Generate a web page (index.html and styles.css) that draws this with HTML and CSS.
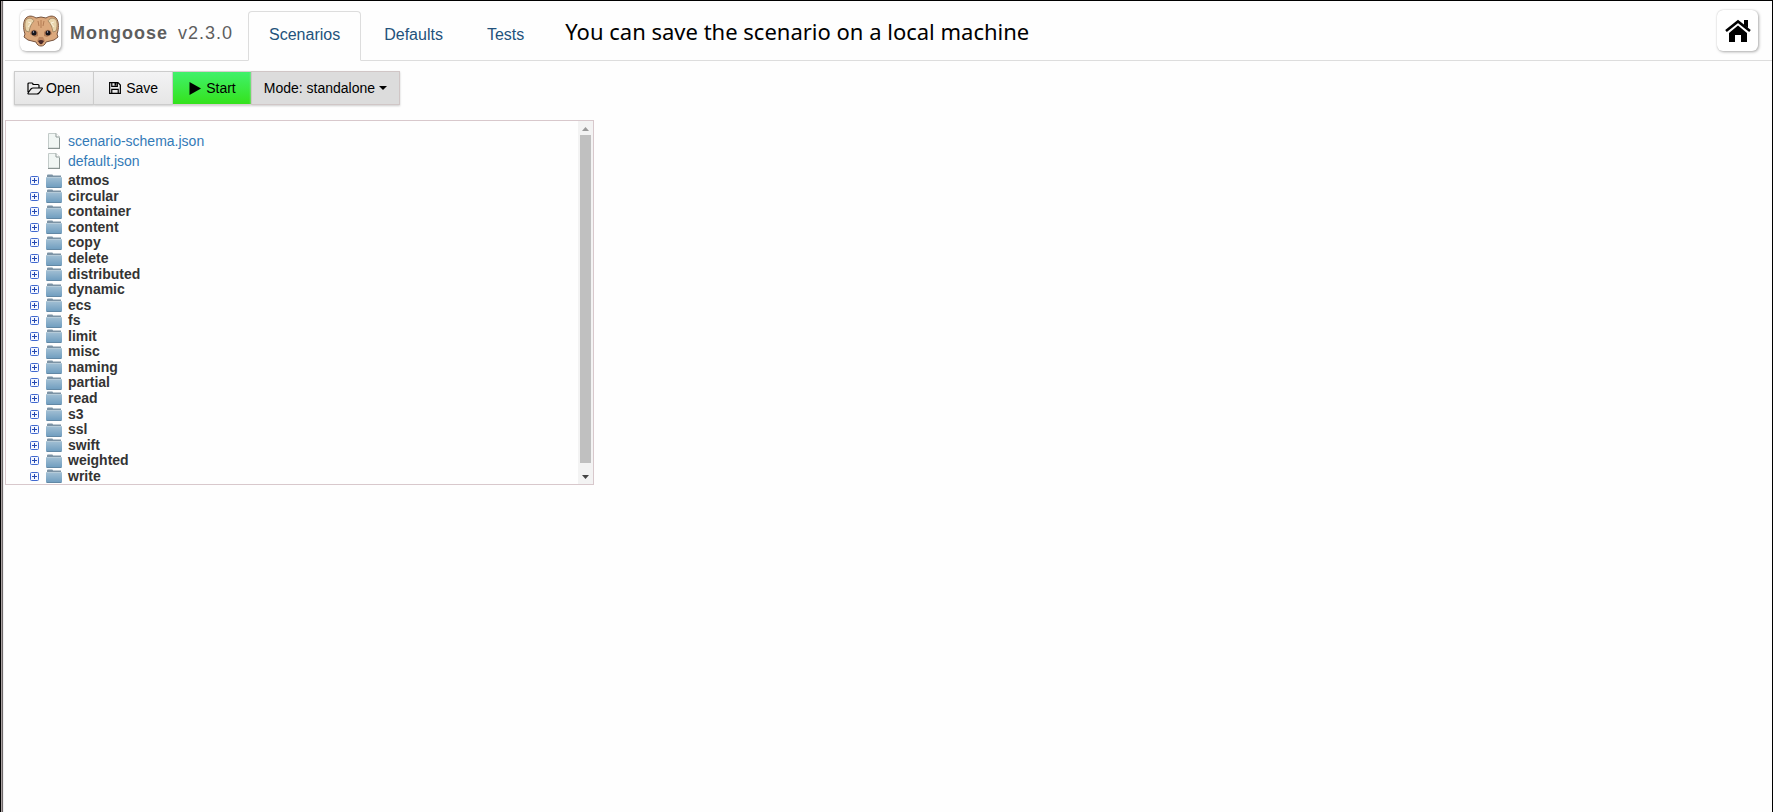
FILE: index.html
```html
<!DOCTYPE html>
<html lang="en">
<head>
<meta charset="utf-8">
<title>Mongoose</title>
<link rel="stylesheet" href="styles.css">
</head>
<body>
<svg class="defs" aria-hidden="true">
  <defs>
    <linearGradient id="folder-fill" x1="0" y1="0" x2="0" y2="1"><stop offset="0" stop-color="#a3c0d4"/><stop offset="1" stop-color="#6f9dbf"/></linearGradient>
    <symbol id="folder" viewBox="0 0 16 14">
      <path d="M1 1.500Q1 .5 2 .5h4q1 0 1 1H15v3H1z" fill="#7c93a5"/>
      <path d="M0 3h16v9.500q0 1-1 1H1q-1 0-1-1z" fill="url(#folder-fill)"/>
      <path d="M0 3.500h16" stroke="#b5cbd9"/><path d="M.5 13.500h15" stroke="#6288a5"/>
    </symbol>
    <symbol id="plus" viewBox="0 0 9 9">
      <rect x=".5" y=".5" width="8" height="8" rx="1" fill="#f4f7ff" stroke="#4169cf"/>
      <path d="M2 4.500h5M4.500 2v5" stroke="#2448b0"/>
    </symbol>
    <symbol id="file" viewBox="0 0 14 16">
      <path d="M1.500.5h7.500l3.500 3.500v11h-11z" fill="#f1f6f4" stroke="#c3cbc9"/>
      <path d="M9 .5v3.500h3.500" fill="#fff" stroke="#8d9896"/><path d="M1 15.500h12M12.500 5v10" stroke="#8b9593"/>
    </symbol>
  </defs>
</svg>
<header class="topbar">
  <a class="tile" href="#" aria-label="Mongoose">
    <svg width="36" height="32" viewBox="0 0 36 32">
      <path d="M2 19C0 14 0 6 3 3c3-3 7-2 10 0q5-2 10 0c3-2 7-3 10 0 3 3 3 11 1 16l1 3-4 3-8 2c-1 3-3 4-5 4s-4-1-5-4l-8-2-4-3z" fill="#dca97d" stroke="#77543f"/>
      <path d="M3 16C1 10 2 5 4 4c3-2 6 0 7 2-3 3-4 6-5 11zM33 16c2-6 1-11-1-12-3-2-6 0-7 2 3 3 4 6 5 11z" fill="#e9d5ad" stroke="#a98d68"/>
      <path d="M5 7l3 1-3 4M31 7l-3 1 3 4" fill="none" stroke="#faf2dc"/>
      <path d="M18 5v8M15 6l1 5M21 6l-1 5" stroke="#b47c54"/>
      <path d="M8 16q4-3 7 1v4l-3 1-5-3zM28 16q-4-3-7 1v4l3 1 5-3z" fill="#b67e58"/>
      <circle cx="11" cy="18" r="2.500" fill="#17151b"/><circle cx="25" cy="18" r="2.500" fill="#17151b"/>
      <circle cx="10.500" cy="17" r=".7" fill="#c9c4d8"/><circle cx="24.500" cy="17" r=".7" fill="#c9c4d8"/>
      <path d="M14 26l2-4h4l2 4-4 4z" fill="#bd855f"/>
      <path d="M15 26q3-2 6 0l-2 3h-2z" fill="#4c2b2b"/>
    </svg>
  </a>
  <div class="brand"><strong>Mongoose</strong><span>v2.3.0</span></div>
  <nav class="tabs">
    <a class="tab active" href="#">Scenarios</a>
    <a class="tab" href="#">Defaults</a>
    <a class="tab" href="#">Tests</a>
  </nav>
  <p class="message">You can save the scenario on a local machine</p>
  <a class="tile home" href="#" aria-label="Home">
    <svg width="28" height="24" viewBox="0 0 28 24">
      <path d="M2 12L14 2.500 26 12" fill="none" stroke="#000" stroke-width="2.600"/>
      <path d="M20 1h4v8l-4-3zM5 14l9-7.500 9 7.500v9h-6v-7h-6v7H5z"/>
    </svg>
  </a>
</header>
<main>
  <div class="toolbar">
    <button class="btn open" type="button"><svg width="16" height="13" viewBox="0 0 16 13"><path d="M1 10V2q0-1 1-1h3q1 0 1 1v.5h5q1 0 1 1V6M1 11l3-4q1-1 2-1h9q.6 0 .2.800L12 11q-1 1-2 1H2q-1.300 0-1-1z" fill="none" stroke="#000" stroke-width="1.200"/></svg>Open</button>
    <button class="btn save" type="button"><svg width="12" height="12" viewBox="0 0 13 13"><path d="M.7.700h9l2.600 2.600v9H.7zM3 .7v4h6v-4M3 12.300V8h7v4.300" fill="none" stroke="#000" stroke-width="1.300"/><path d="M6 1h2v3H6z"/></svg>Save</button>
    <button class="btn start" type="button"><svg width="12" height="13" viewBox="0 0 12 13"><path d="M.5 0l11.500 6.500L.5 13z"/></svg>Start</button>
    <button class="btn mode" type="button">Mode: standalone<span class="caret"></span></button>
  </div>
  <section class="panel">
    <div class="tree">
      <ul class="files">
        <li><svg width="14" height="16"><use href="#file"/></svg><a href="#">scenario-schema.json</a></li>
        <li><svg width="14" height="16"><use href="#file"/></svg><a href="#">default.json</a></li>
      </ul>
      <ul class="folders">
        <li><svg width="9" height="9"><use href="#plus"/></svg><svg width="16" height="14"><use href="#folder"/></svg>atmos</li>
        <li><svg width="9" height="9"><use href="#plus"/></svg><svg width="16" height="14"><use href="#folder"/></svg>circular</li>
        <li><svg width="9" height="9"><use href="#plus"/></svg><svg width="16" height="14"><use href="#folder"/></svg>container</li>
        <li><svg width="9" height="9"><use href="#plus"/></svg><svg width="16" height="14"><use href="#folder"/></svg>content</li>
        <li><svg width="9" height="9"><use href="#plus"/></svg><svg width="16" height="14"><use href="#folder"/></svg>copy</li>
        <li><svg width="9" height="9"><use href="#plus"/></svg><svg width="16" height="14"><use href="#folder"/></svg>delete</li>
        <li><svg width="9" height="9"><use href="#plus"/></svg><svg width="16" height="14"><use href="#folder"/></svg>distributed</li>
        <li><svg width="9" height="9"><use href="#plus"/></svg><svg width="16" height="14"><use href="#folder"/></svg>dynamic</li>
        <li><svg width="9" height="9"><use href="#plus"/></svg><svg width="16" height="14"><use href="#folder"/></svg>ecs</li>
        <li><svg width="9" height="9"><use href="#plus"/></svg><svg width="16" height="14"><use href="#folder"/></svg>fs</li>
        <li><svg width="9" height="9"><use href="#plus"/></svg><svg width="16" height="14"><use href="#folder"/></svg>limit</li>
        <li><svg width="9" height="9"><use href="#plus"/></svg><svg width="16" height="14"><use href="#folder"/></svg>misc</li>
        <li><svg width="9" height="9"><use href="#plus"/></svg><svg width="16" height="14"><use href="#folder"/></svg>naming</li>
        <li><svg width="9" height="9"><use href="#plus"/></svg><svg width="16" height="14"><use href="#folder"/></svg>partial</li>
        <li><svg width="9" height="9"><use href="#plus"/></svg><svg width="16" height="14"><use href="#folder"/></svg>read</li>
        <li><svg width="9" height="9"><use href="#plus"/></svg><svg width="16" height="14"><use href="#folder"/></svg>s3</li>
        <li><svg width="9" height="9"><use href="#plus"/></svg><svg width="16" height="14"><use href="#folder"/></svg>ssl</li>
        <li><svg width="9" height="9"><use href="#plus"/></svg><svg width="16" height="14"><use href="#folder"/></svg>swift</li>
        <li><svg width="9" height="9"><use href="#plus"/></svg><svg width="16" height="14"><use href="#folder"/></svg>weighted</li>
        <li><svg width="9" height="9"><use href="#plus"/></svg><svg width="16" height="14"><use href="#folder"/></svg>write</li>
      </ul>
    </div>
    <div class="scrollbar">
      <svg width="7" height="4" viewBox="0 0 7 4"><path d="M0 4l3.500-4L7 4z" fill="#999"/></svg>
      <div class="thumb"></div>
      <svg width="7" height="4" viewBox="0 0 7 4"><path d="M0 0l3.500 4L7 0z" fill="#444"/></svg>
    </div>
  </section>
</main>
</body>
</html>
```
FILE: styles.css
```css
* { box-sizing: border-box; }
body {
  margin: 0;
  min-height: 100vh;
  padding-left: 4px;
  border: 1px solid #000;
  border-bottom: 0;
  background: linear-gradient(90deg, #d3cccb 0 1px, #aaa1a1 1px 2px, #6e6969 2px 3px, #eeeef0 3px 4px, #fefefe 4px);
  color: #333;
  font-family: "Liberation Sans", Arial, sans-serif;
  font-size: 14px;
}
a { text-decoration: none; color: #337ab7; }
ul { list-style: none; margin: 0; padding: 0; }
svg { flex: none; }
.defs { position: absolute; width: 0; height: 0; }
.topbar {
  display: flex;
  height: 60px;
  padding: 0 14px 0 15px;
  border-bottom: 1px solid #ddd;
}
.tile {
  display: flex;
  align-items: center;
  justify-content: center;
  width: 41px;
  height: 41px;
  margin-top: 9px;
  border-radius: 6px;
  background: #fff;
  box-shadow: 0 0 1px #bbb, 1px 1px 3px #aaa;
}
.home { margin-left: auto; }
.brand {
  display: flex;
  gap: 10px;
  margin: 21px 15px 0 9px;
  font-size: 18px;
  line-height: 22px;
  letter-spacing: 1px;
  color: #5e5e5e;
}
.tabs { display: flex; gap: 2px; margin-top: 10px; }
.tab {
  height: 50px;
  padding: 0 20px;
  border: 1px solid transparent;
  border-radius: 4px 4px 0 0;
  font-size: 16px;
  line-height: 45px;
  color: #23527c;
}
.tab.active { border-color: #ddd; border-bottom-color: #fefefe; background: #fefefe; }
.message {
  margin: 14px 0 0 20px;
  font-family: "Noto Sans", "Open Sans", sans-serif;
  font-size: 22px;
  line-height: 32px;
  color: #000;
}
.toolbar { display: flex; margin: 10px 0 0 9px; }
.btn {
  display: flex;
  align-items: center;
  justify-content: center;
  gap: 3px;
  height: 34px;
  padding: 0 12px;
  border: 1px solid #ccc;
  background: linear-gradient(#f3f3f4, #e6e6e6);
  box-shadow: 0 1px 2px #ccc;
  font: inherit;
  color: #000;
}
.open { padding-right: 13px; }
.save { gap: 5px; padding: 0 14px 0 15px; border-left: 0; }
.start { gap: 5px; padding: 0 15px 0 16px; border: 1px solid #d8d0d0; border-width: 1px 0; background: linear-gradient(#41f16b, #34e21c); }
.mode { gap: 4px; padding: 0 12px; background: #dcdcdc; border-color: #d0c6c6; }
.caret { border: 4px solid transparent; border-top-color: #000; border-bottom: 0; }
.panel {
  display: flex;
  width: 33.333%;
  margin-top: 15px;
  border: 1px solid #d8c8cc;
  background: #fefefe;
}
.tree { flex: 1; padding: 10px 0 0 24px; }
.files li { display: flex; align-items: center; gap: 7px; height: 20px; padding-left: 17px; }
.folders { display: grid; grid-auto-rows: 1fr; height: 311px; margin-top: 2px; }
.folders li { display: flex; align-items: center; gap: 6px; font-weight: bold; line-height: 15px; }
.folders svg + svg { margin-left: 1px; }
.scrollbar {
  display: flex;
  flex-direction: column;
  align-items: center;
  width: 15px;
  padding: 6px 0 5px;
  background: #f3f3f3;
}
.thumb { flex: 1; width: 11px; margin: 4px 0 12px; background: #c0c0c0; }
```
